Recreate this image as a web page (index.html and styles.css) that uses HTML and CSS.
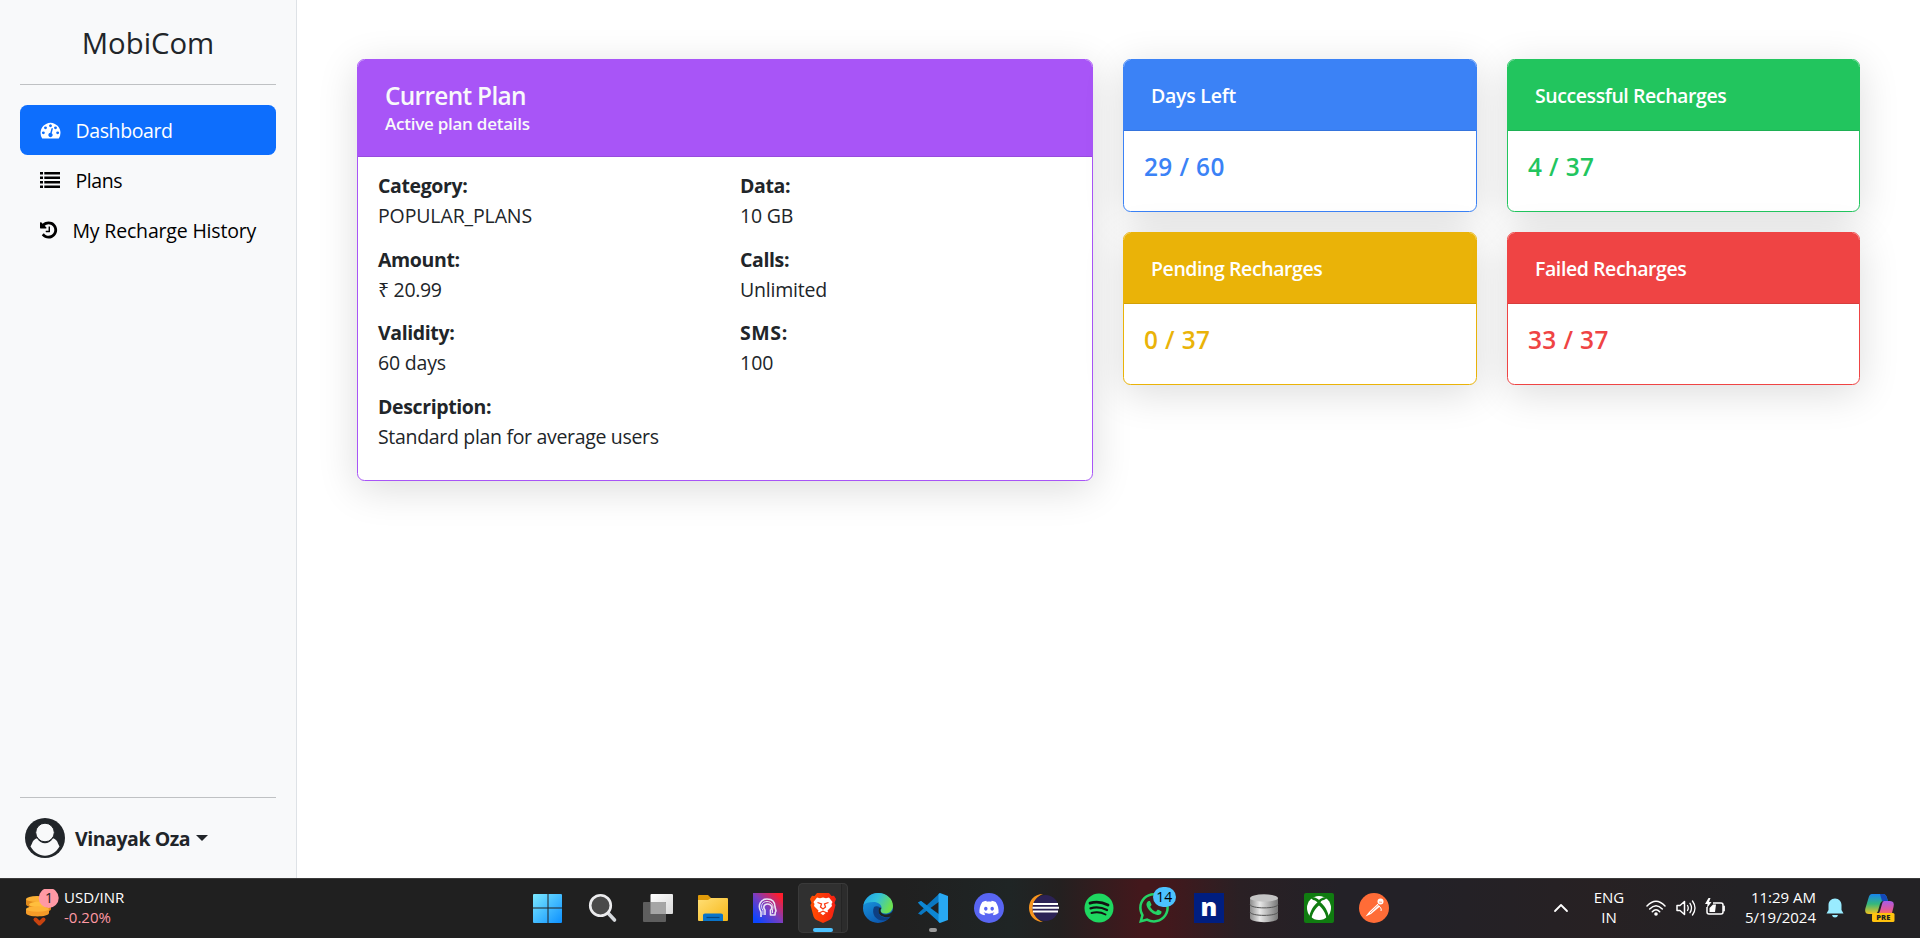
FILE: index.html
```html
<!DOCTYPE html>
<html lang="en">
<head>
<meta charset="utf-8">
<title>MobiCom</title>
<link rel="stylesheet" href="styles.css">
</head>
<body>
<div class="app">
  <aside class="sidebar">
    <div class="brand">MobiCom</div>
    <hr class="rule">
    <nav class="nav">
      <a class="nav-item active"><svg class="ico" width="21" height="20" viewBox="0 0 1792 1792"><path fill="currentColor" d="M384 1152q0-53-37.5-90.5t-90.5-37.5-90.5 37.5-37.5 90.5 37.5 90.5 90.5 37.5 90.5-37.5 37.5-90.5zm192-448q0-53-37.5-90.5t-90.5-37.5-90.5 37.5-37.5 90.5 37.5 90.5 90.5 37.5 90.5-37.5 37.5-90.5zm428 481l101-382q6-26-7.5-48.5t-38.5-29.5-48 6.5-30 39.5l-101 382q-60 5-107 43.5t-63 98.5q-20 77 20 146t117 89 146-20 89-117q16-60-6-117t-72-91zm660-33q0-53-37.5-90.5t-90.5-37.5-90.5 37.5-37.5 90.5 37.5 90.5 90.5 37.5 90.5-37.5 37.5-90.5zm-640-640q0-53-37.5-90.5t-90.5-37.5-90.5 37.5-37.5 90.5 37.5 90.5 90.5 37.5 90.5-37.5 37.5-90.5zm448 192q0-53-37.5-90.5t-90.5-37.5-90.5 37.5-37.5 90.5 37.5 90.5 90.5 37.5 90.5-37.5 37.5-90.5zm320 448q0 261-141 483-19 29-54 29h-1402q-35 0-54-29-141-221-141-483 0-182 71-348t191-286 286-191 348-71 348 71 286 191 191 286 71 348z"/></svg><span class="t-dash">Dashboard</span></a>
      <a class="nav-item"><svg class="ico" width="21" height="20" viewBox="0 0 21 20" fill="currentColor"><path d="M0 2h3v2.600H0zM4.300 2H20v2.600H4.300zM0 6.500h3v2.600H0zM4.300 6.500H20v2.600H4.300zM0 11h3v2.600H0zM4.300 11H20v2.600H4.300zM0 15.400h3V18H0zM4.300 15.400H20V18H4.300z"/></svg><span class="t-plans">Plans</span></a>
      <a class="nav-item"><svg class="ico" width="18" height="20" viewBox="128 0 1536 1792" preserveAspectRatio="xMinYMid"><path fill="currentColor" d="M1664 896q0 156-61 298t-164 245-245 164-298 61q-172 0-327-72.5t-264-204.5q-7-10-6.5-22.5t8.5-20.5l137-138q10-9 25-9 16 2 23 12 73 95 179 147t225 52q104 0 198.5-40.5t163.5-109.5 109.5-163.5 40.5-198.5-40.5-198.5-109.5-163.5-163.5-109.5-198.5-40.5q-98 0-188 35.5t-160 101.5l137 138q31 30 14 69-17 40-59 40h-448q-26 0-45-19t-19-45v-448q0-42 40-59 39-17 69 14l130 129q107-101 244.5-156.5t284.5-55.5q156 0 298 61t245 164 164 245 61 298zm-640-288v448q0 14-9 23t-23 9h-320q-14 0-23-9t-9-23v-64q0-14 9-23t23-9h224v-352q0-14 9-23t23-9h64q14 0 23 9t9 23z"/></svg><span class="t-hist">My Recharge History</span></a>
    </nav>
    <hr class="rule rule-bottom">
    <div class="user">
      <svg class="avatar" width="40" height="40" viewBox="0 0 40 40"><circle cx="20" cy="20" r="20" fill="#212529"/><path fill="#f8f9fa" d="M7 25.500C7.500 23 9.500 21 12 20.200C14 23.500 17 25.300 20 25.300S26 23.500 28 20.200C30.500 21 32.500 23 33 25.500L34.500 28.500C31 34.500 26 37.700 20 37.700S9 34.500 5.500 28.500Z"/><circle cx="20" cy="14.500" r="9.300" fill="#f8f9fa" stroke="#212529" stroke-width="1"/></svg>
      <strong class="user-name">Vinayak Oza</strong><span class="caret"></span>
    </div>
  </aside>
  <main class="main">
    <section class="card plan">
      <header class="card-head plan-head"><h5 class="plan-title">Current Plan</h5><h6 class="plan-sub">Active plan details</h6></header>
      <div class="plan-body">
        <div class="field"><strong>Category:</strong><span class="t-pop">POPULAR_PLANS</span></div>
        <div class="field"><strong>Data:</strong><span>10 GB</span></div>
        <div class="field"><strong>Amount:</strong><span class="t-std">₹ 20.99</span></div>
        <div class="field"><strong>Calls:</strong><span>Unlimited</span></div>
        <div class="field"><strong>Validity:</strong><span>60 days</span></div>
        <div class="field"><strong class="t-sms">SMS:</strong><span class="t-num">100</span></div>
        <div class="field wide"><strong>Description:</strong><span class="t-std">Standard plan for average users</span></div>
      </div>
    </section>
    <div class="stats">
      <section class="card blue"><header class="card-head t-days">Days Left</header><div class="value">29 / 60</div></section>
      <section class="card green"><header class="card-head">Successful Recharges</header><div class="value">4 / 37</div></section>
      <section class="card yellow"><header class="card-head">Pending Recharges</header><div class="value">0 / 37</div></section>
      <section class="card red"><header class="card-head">Failed Recharges</header><div class="value">33 / 37</div></section>
    </div>
  </main>
</div>
<footer class="taskbar">
  <div class="widget">
    <svg width="34" height="38" viewBox="0 0 34 38"><path d="M1 10v5c0 5 22 5 22 0v-5z" fill="#e08a1c"/><ellipse cx="12" cy="10" rx="11" ry="3" fill="#fbb034"/><path d="M4 15v5c0 4.500 22 4.500 22 0v-5z" fill="#e5871c"/><ellipse cx="15" cy="15.500" rx="11" ry="3" fill="#ffbe3d"/><path d="M1 20v4c0 4.500 23 4.500 23 0v-4z" fill="#f49b28"/><ellipse cx="12.500" cy="20" rx="11.500" ry="2.800" fill="#fdb338"/><path d="M10.500 30.500l4 4 4-4" fill="none" stroke="#c8430f" stroke-width="4" stroke-linecap="round" stroke-linejoin="round"/><circle cx="23.700" cy="9" r="10" fill="#ff99a4"/><text x="24" y="14" text-anchor="middle" class="badge-text">1</text></svg>
    <div class="quote"><span>USD/INR</span><span class="down">-0.20%</span></div>
  </div>
  <div class="apps">
    <svg width="30" height="30" viewBox="0 0 30 30"><defs><linearGradient id="win" gradientUnits="userSpaceOnUse" x1="0" y1="0" x2="30" y2="30"><stop stop-color="#7deaff"/><stop offset="1" stop-color="#0b8fff"/></linearGradient></defs><path fill="url(#win)" d="M1 1h13.500v13.500H0V2q0-1 1-1zM15.500 1H28q1 0 1 1v12.500H15.500zM0 15.500h14.500V30H1q-1 0-1-1zM15.500 15.500H29V29q0 1-1 1H15.500z"/></svg>
    <svg width="30" height="30" viewBox="0 0 30 30"><path d="M20 20l6.500 7" stroke="#d5d8dc" stroke-width="3.600" stroke-linecap="round"/><circle cx="12.500" cy="12.500" r="10.300" fill="#4a4a4a" stroke="#ececee" stroke-width="2.600"/></svg>
    <svg width="30" height="30" viewBox="0 0 30 30"><defs><linearGradient id="tv" x2="1" y2="1"><stop stop-color="#fff"/><stop offset="1" stop-color="#d8d8d8"/></linearGradient></defs><rect x="7.500" y="1" width="22.500" height="20" rx="1" fill="url(#tv)"/><rect y="9" width="23" height="20" rx="1" fill="#5e5e5e"/><path d="M7.500 9H22q1 0 1 1v11H7.500z" fill="#a6a6a6"/></svg>
    <svg width="30" height="30" viewBox="0 0 30 30"><defs><linearGradient id="fo" x2="1" y2="1"><stop stop-color="#ffdf76"/><stop offset="1" stop-color="#f7b717"/></linearGradient></defs><path d="M0 3q0-1 1-1h9l3 3v5H0z" fill="#e19b09"/><path d="M0 7h10l3-2h16q1 0 1 1v21q0 1-1 1H1q-1 0-1-1z" fill="url(#fo)"/><path d="M5 28v-6q0-1.500 2-1.500h16q2 0 2 1.500v6z" fill="#0a74c9"/><path d="M8.500 24.500h13" stroke="#07457f" stroke-width="1.200"/></svg>
    <svg width="30" height="30" viewBox="0 0 30 30"><defs><linearGradient id="ia" x1="0" y1="1" x2="1" y2="0"><stop offset=".1" stop-color="#0b45ff"/><stop offset=".5" stop-color="#7b3dc0"/><stop offset=".9" stop-color="#ff1d2d"/></linearGradient></defs><path d="M0 0h30v30H0z" fill="url(#ia)"/><path d="M8 24v-5C4 12 8 6 14 6c6 0 8 4 8 8l1 4q-1 1-1 4h-4.500v-5c2.500-2 1-6-3-6s-4.500 4-2.500 6v5" fill="none" stroke="#e9e4f5" stroke-width="1.600" stroke-linejoin="round"/><path d="M10 22v-4.500C7 13 9 8.500 14 8.500s7 4.500 5.500 8.500v3" fill="none" stroke="#e9e4f5" stroke-width="1"/></svg>
    <div class="running"><svg width="30" height="30" viewBox="0 0 30 30"><defs><linearGradient id="br" x2="1"><stop stop-color="#ff5000"/><stop offset="1" stop-color="#f51f13"/></linearGradient></defs><path fill="url(#br)" d="M9 0h12l2.500 3 2.500-.3 2 3.300-1.500 4 1 2-3 11.500q-1 2.500-3 3.500L15 30l-6.500-3q-2-1-3-3.500L2.500 12l1-2L2 6l2-3.300L6.500 3z"/><path fill="#fff" d="M9 4.500l3 .8 3-.8 3 .8 3-.8 3.500 4.500-1 2 .5 2-4.500 4.500.5 1.500-2 .8-3 2.500-3-2.500-2-.8.500-1.500L6 13l.5-2-1-2z"/><path d="M9.500 9.500l4 1.500-1 3 2.500 2 2.500-2-1-3 4-1.500M11 20l4-1.800 4 1.800" fill="none" stroke="#fb3a12" stroke-width="1.300"/></svg></div>
    <svg width="30" height="30" viewBox="0 0 30 30"><defs><linearGradient id="e1" x2="1" y2=".4"><stop stop-color="#1d9fe8"/><stop offset=".5" stop-color="#32c0da"/><stop offset="1" stop-color="#6ce052"/></linearGradient><linearGradient id="e2" x2=".6" y2="1"><stop stop-color="#1ba3e8"/><stop offset="1" stop-color="#0b56ae"/></linearGradient></defs><circle cx="15" cy="15" r="15" fill="url(#e2)"/><path d="M.5 12C2 5 8 0 15 0c9 0 15 6 15 13 0 5-4 7.500-7.500 7.500-3 0-5-1-5-2.500 0-1 1-1.500 1-3.500 0-3-3.500-5.500-8-5.500C6 9 2 10 .5 12z" fill="url(#e1)"/><path d="M11 14c-3 7 2 13.500 9 13.500 3 0 5.500-1 7.500-3.500-5 2-12 0-12-6 0-1.500.5-3 1.500-3.500-2-1.500-4.500-1.500-6-.5z" fill="#0e3f82"/><path d="M17.500 17c0 2.500 2 4.500 5.500 4.500 3.500 0 6-1.500 7.500-5v6l-2.500 1c-5 2-12.500 0-12.500-5.500 0-1.500.5-3 1.500-3.500l1.500.500q-1 1-1 2z" fill="#202222"/></svg>
    <div class="open"><svg width="30" height="30" viewBox="0 0 30 30"><path d="M22 0L8.500 12.500 3 8 0 9.500 6 15l-6 5.500L3 22l19-14z" fill="#0a78c2"/><path d="M0 9.500L3 8l19 14v8L2 12z" fill="#0d87d4"/><path d="M22 0l8 3v24l-8 3-1.500-1V1z" fill="#28a8f2"/></svg></div>
    <svg width="30" height="30" viewBox="0 0 30 30"><circle cx="15" cy="15" r="15" fill="#5865f2"/><g transform="translate(5.400 5.400) scale(.8)"><path fill="#fff" d="M20.317 4.370a19.791 19.791 0 00-4.885-1.515.074.074 0 00-.079.037c-.211.375-.445.865-.608 1.250-1.845-.276-3.680-.276-5.487 0-.164-.393-.406-.874-.618-1.250a.077.077 0 00-.079-.037 19.736 19.736 0 00-4.885 1.515.070.070 0 00-.032.028C.533 9.046-.319 13.580.099 18.058a.082.082 0 00.031.056c2.053 1.508 4.041 2.423 5.993 3.029a.078.078 0 00.084-.028c.462-.630.873-1.295 1.226-1.994a.076.076 0 00-.042-.106c-.653-.248-1.274-.550-1.872-.892a.077.077 0 01-.008-.128c.126-.094.252-.192.372-.291a.074.074 0 01.078-.011c3.928 1.793 8.180 1.793 12.061 0a.074.074 0 01.079.010c.120.099.246.198.373.292a.077.077 0 01-.007.128 12.299 12.299 0 01-1.873.891.077.077 0 00-.041.107c.360.698.772 1.363 1.225 1.993a.076.076 0 00.084.029c1.961-.607 3.950-1.522 6.002-3.029a.077.077 0 00.031-.055c.500-5.177-.838-9.674-3.549-13.660a.061.061 0 00-.031-.029zM8.020 15.331c-1.183 0-2.157-1.086-2.157-2.419 0-1.333.956-2.419 2.157-2.419 1.211 0 2.176 1.095 2.157 2.419 0 1.333-.956 2.419-2.157 2.419zm7.975 0c-1.183 0-2.157-1.086-2.157-2.419 0-1.333.955-2.419 2.157-2.419 1.211 0 2.176 1.095 2.157 2.419 0 1.333-.946 2.419-2.157 2.419z"/></g></svg>
    <svg width="30" height="30" viewBox="0 0 30 30"><path d="M14 1C5 1 0 7.500 0 15s5.500 14 14 14C8 27 4 21 4 15S8 3 14 1z" fill="#f7941e"/><circle cx="16.500" cy="15" r="13" fill="#2c2255"/><path d="M4 11h25M3.500 14.800H30M4 18.600h25" stroke="#fff" stroke-width="2"/></svg>
    <svg width="30" height="30" viewBox="0 0 30 30"><circle cx="15" cy="15" r="14.500" fill="#1ed760"/><path d="M6 10.200Q15 7.500 24 12" fill="none" stroke="#121212" stroke-width="2.800" stroke-linecap="round"/><path d="M6.500 15.300Q15 13 23 17" fill="none" stroke="#121212" stroke-width="2.300" stroke-linecap="round"/><path d="M7.500 20Q15 18 21.500 21.500" fill="none" stroke="#121212" stroke-width="1.900" stroke-linecap="round"/></svg>
    <div class="badged"><svg width="30" height="30" viewBox="0 0 16 16"><path fill="#25d366" d="M13.601 2.326A7.850 7.850 0 0 0 7.994 0C3.627 0 .068 3.558.064 7.926c0 1.399.366 2.760 1.057 3.965L0 16l4.204-1.102a7.900 7.900 0 0 0 3.790.965h.004c4.368 0 7.926-3.558 7.930-7.930A7.900 7.900 0 0 0 13.600 2.326zM7.994 14.521a6.600 6.600 0 0 1-3.356-.920l-.240-.144-2.494.654.666-2.433-.156-.251a6.560 6.560 0 0 1-1.007-3.505c0-3.626 2.957-6.584 6.591-6.584a6.560 6.560 0 0 1 4.660 1.931 6.560 6.560 0 0 1 1.928 4.660c-.004 3.639-2.961 6.592-6.592 6.592m3.615-4.934c-.197-.099-1.170-.578-1.353-.646-.182-.065-.315-.099-.445.099-.133.197-.513.646-.627.775-.114.133-.232.148-.430.050-.197-.100-.836-.308-1.592-.985-.590-.525-.985-1.175-1.103-1.372-.114-.198-.011-.304.088-.403.087-.088.197-.232.296-.346.100-.114.133-.198.198-.330.065-.134.034-.248-.015-.347-.050-.099-.445-1.076-.612-1.470-.160-.389-.323-.335-.445-.340-.114-.007-.247-.007-.380-.007a.730.730 0 0 0-.529.247c-.182.198-.691.677-.691 1.654s.710 1.916.810 2.049c.098.133 1.394 2.132 3.383 2.992.470.205.840.326 1.129.418.475.152.904.129 1.246.080.380-.058 1.171-.480 1.338-.943.164-.464.164-.860.114-.943-.049-.084-.182-.133-.380-.232"/></svg><span class="count">14</span></div>
    <div class="n-tile">n</div>
    <svg width="30" height="30" viewBox="0 0 30 30"><defs><linearGradient id="db" x2="1"><stop stop-color="#8c8c8c"/><stop offset=".35" stop-color="#e8e8e8"/><stop offset="1" stop-color="#777"/></linearGradient></defs><path d="M1 5v20c0 5.500 28 5.500 28 0V5z" fill="url(#db)"/><path d="M1 11.500c1 4.500 27 4.500 28 0M1 19c1 4.500 27 4.500 28 0" fill="none" stroke="#555" stroke-width="1"/><ellipse cx="15" cy="5" rx="14" ry="3.700" fill="#c4c4c4"/></svg>
    <svg width="30" height="30" viewBox="0 0 30 30"><rect width="30" height="30" rx="2" fill="#107c10"/><circle cx="15" cy="15" r="12" fill="#fff"/><path d="M7 5C10 3 13 5.500 15 7c2-1.500 5-4 8-2l-3 2c-2 0-3 1-3.500 2.500C20 12 24 18 24.500 23l-2 3C22 20 18 15 15 12.500 12 15 8 20 7.500 26l-2-3C6 18 10 12 13.500 9.500 12 8 11 7 9 7z" fill="#107c10"/></svg>
    <svg width="30" height="30" viewBox="0 0 30 30"><circle cx="15" cy="15" r="15" fill="#ff6c37"/><path d="M6.500 23.500l3.500-4.500 8.500-8 2.500 2.500-9 7.500z" fill="#fff"/><circle cx="21.500" cy="8.500" r="3" fill="#fff"/><path d="M10 19l2 2M18 11l3 3q2 2 1 4" stroke="#fff" fill="none" stroke-width="1"/><path d="M11 20l9-8.500M20 9l3 .3" stroke="#ff6c37" stroke-width=".7"/></svg>
  </div>
  <div class="tray">
    <svg class="chev" width="16" height="16" viewBox="0 0 16 16"><path d="M2 11l6-6 6 6" fill="none" stroke="#fff" stroke-width="1.800" stroke-linecap="round" stroke-linejoin="round"/></svg>
    <div class="lang"><span>ENG</span><span>IN</span></div>
    <svg class="wifi" width="20" height="20" viewBox="0 0 20 20"><path d="M1 8Q10-1.500 19 8M3.700 11Q10 4.300 16.300 11M6.300 13.700Q10 9.800 13.700 13.700" fill="none" stroke="#fff" stroke-width="1.500" stroke-linecap="round"/><circle cx="10" cy="16" r="1.800" fill="#fff"/></svg>
    <svg class="vol" width="20" height="20" viewBox="0 0 20 20" fill="none" stroke="#fff" stroke-width="1.500" stroke-linecap="round" stroke-linejoin="round"><path d="M1 7.500h3L8.500 3.500v13L4 12.500H1z"/><path d="M11.500 7.500Q13 10 11.500 12.500M14 5.300Q17 10 14 14.700M16.500 3Q21.500 10 16.500 17" stroke-width="1.300"/></svg>
    <svg class="bat" width="20" height="20" viewBox="0 0 20 20"><path d="M8 5h8q2 0 2 2v7q0 2-2 2H4q-2 0-2-2V9" fill="none" stroke="#fff" stroke-width="1.500"/><path d="M19 8.500v4" stroke="#fff" stroke-width="1.800" stroke-linecap="round"/><path d="M4.500 14V10L8 6.500h3L10 14zM3.500 0L0 6h2.500L2 10l4.500-6H4L5.500 0z" fill="#fff"/></svg>
    <div class="clock"><span>11:29 AM</span><span>5/19/2024</span></div>
    <svg class="bell" width="18" height="20" viewBox="0 0 18 20"><path d="M9 .500c-4 0-6.500 3-6.500 6.500v5L.5 15.500h17l-2-3.500V7C15.500 3.500 13 .500 9 .500zM6 17h6q-.5 2.500-3 2.500T6 17z" fill="#99ebff"/></svg>
    <svg class="copilot" width="30" height="30" viewBox="0 0 30 30"><defs><linearGradient id="c1" x2="0" y2="1"><stop stop-color="#1685ee"/><stop offset=".5" stop-color="#35b87b"/><stop offset="1" stop-color="#f5c31c"/></linearGradient><linearGradient id="c2" x2="0" y2="1"><stop stop-color="#a85be8"/><stop offset=".6" stop-color="#e0599c"/><stop offset="1" stop-color="#ff7a45"/></linearGradient></defs><path d="M7 1h11q3 0 4 4l1 3h-5q-2 0-3 3l-2 7q-1 3-4 3H4q-5 0-3.500-6l3-10Q4.500 1 7 1z" fill="url(#c1)"/><path d="M15 1h3q3 0 4 4l1 3h-6z" fill="#1449b8"/><path d="M19 8h6q5 0 3.500 6l-2 8H12q2-1 3-4l2-7q.5-3 2-3z" fill="url(#c2)"/><rect x="7" y="20" width="22.500" height="9" rx="1.500" fill="#ffc20e"/><text x="18.300" y="27.400" text-anchor="middle" class="pre-text">PRE</text></svg>
  </div>
</footer>
</body>
</html>
```
FILE: styles.css
```css
* { box-sizing: border-box; }
body { margin: 0; width: 1920px; height: 938px; overflow: hidden; background: #fff; color: #212529; font: 19.5px/30px "Segoe UI", "Open Sans", "Noto Sans", sans-serif; font-weight: 370; }
h5, h6 { margin: 0; }
.app { display: flex; height: 878px; }
.sidebar { display: flex; flex-direction: column; width: 297px; padding: 19px 20px 20px; background: #f8f9fa; border-right: 1px solid #dee2e6; }
.brand { padding-top: 2px; height: 45px; font-size: 29.3px; line-height: 45px; text-align: center; letter-spacing: 0; }
.rule { width: 256px; height: 1px; margin: 20px 0; border: 0; background: #bfc1c3; flex: none; }
.rule-bottom { margin-top: auto; }
.nav { display: flex; flex-direction: column; }
.nav-item { display: flex; align-items: center; height: 50px; padding: 0 20px; border-radius: 7.5px; color: #000; }
.nav-item.active { background: #0d6efd; color: #fff; }
.ico { margin-right: 14.500px; flex: none; }
.nav-item span { padding-top: 2px; white-space: nowrap; }
.t-dash { letter-spacing: -.4px; }
.t-plans { letter-spacing: -.4px; }
.t-hist { letter-spacing: -.18px; }
.user { display: flex; align-items: center; height: 40px; padding-left: 5px; }
.user-name { margin-left: 10px; padding-top: 2px; white-space: nowrap; letter-spacing: -.45px; }
.caret { margin-left: 6px; border-top: 6px solid #212529; border-left: 6px solid transparent; border-right: 6px solid transparent; }
.main { display: flex; align-items: flex-start; gap: 30px; padding: 59px 60px 0; }
.card { border: 1px solid var(--c); border-radius: 7.5px; background: #fff; box-shadow: 0 8px 40px rgba(0, 0, 0, .14); color: var(--c); }
.card-head { padding: 24px 28px 0 27px; height: 71px; line-height: 24px; font-weight: 600; letter-spacing: -.42px; color: #fff; background: var(--c); border-bottom: 1px solid rgba(0, 0, 0, .1); border-radius: 6.5px 6.5px 0 0; white-space: nowrap; }
.t-days { letter-spacing: -.25px; }
.plan { --c: #a855f7; width: 736px; height: 422px; color: #212529; }
.plan-head { height: 97px; padding: 21px 27px 0; color: #f8f9fa; }
.plan-title { font-size: 24.4px; line-height: 30px; font-weight: 600; letter-spacing: -.68px; }
.plan-sub { margin-top: 2px; font-size: 17px; line-height: 21px; font-weight: 600; letter-spacing: -.25px; }
.plan-body { display: grid; grid-template-columns: 362px 1fr; row-gap: 13.500px; padding: 14px 20px 0; }
.field { display: flex; flex-direction: column; align-items: flex-start; letter-spacing: -.2px; }
.field strong { letter-spacing: -.38px; }
.field .t-sms { letter-spacing: .6px; }
.field .t-num { letter-spacing: 0; }
.field .t-pop { letter-spacing: -.12px; }
.field .t-std { letter-spacing: -.32px; }
.wide { grid-column: 1 / -1; }
.stats { display: grid; grid-template-columns: 354px 353px; gap: 20px 30px; }
.stats .card { height: 153px; }
.blue { --c: #3b82f6; }
.green { --c: #22c55e; }
.yellow { --c: #eab308; }
.red { --c: #ef4444; }
.value { padding: 21px 20px 0; font-size: 24.4px; line-height: 30px; font-weight: 560; letter-spacing: .4px; }
.taskbar { display: grid; grid-template-columns: 533px 856px 1fr; align-items: center; height: 60px; padding-bottom: 1px; color: #fff; font-size: 15px; line-height: 20px; font-weight: 400; border-top: 1px solid #3b3b3b; background: linear-gradient(90deg, #202020 0, #202020 900px, #1f2525 1010px, #242020 1060px, #43181c 1140px, #43181c 1165px, #2a2024 1240px, #232127 1340px, #232127 1420px, #272123 1600px, #232225 1740px, #232225 100%); }
.widget { display: flex; padding-left: 25px; gap: 5px; align-items: center; }
.quote, .lang, .clock { display: flex; flex-direction: column; align-items: flex-start; white-space: nowrap; }
.quote, .lang, .clock { padding-bottom: 2px; }
.down { color: #ff99a4; }
.badge-text { font: 14px "Open Sans", sans-serif; fill: #222; }
.apps { display: flex; justify-content: space-between; align-items: center; }
.apps > svg { flex: none; }
.running, .open, .badged { position: relative; width: 30px; height: 30px; }
.running svg, .open svg, .badged svg { display: block; position: relative; }
.running::before { content: ""; position: absolute; left: -10px; top: -10px; width: 50px; height: 50px; border-radius: 5px; background: linear-gradient(90deg, #303030 43px, #242424 43px, #242424 44px, #2c2c2c 44px); box-shadow: inset 0 0 0 1px #3a3a3a; }
.running::after { content: ""; position: absolute; left: 5px; top: 35px; width: 20px; height: 4px; border-radius: 2px; background: #4cc2ff; }
.open::after { content: ""; position: absolute; left: 11px; top: 35px; width: 8px; height: 4px; border-radius: 2px; background: #9a9a9a; }
.count { position: absolute; left: 14px; top: -6px; width: 23px; height: 20px; border-radius: 10px; background: #4cc2ff; color: #000; font-size: 14px; line-height: 20px; text-align: center; }
.n-tile { width: 30px; height: 30px; background: #001e80; color: #fff; font-size: 25px; font-weight: 800; line-height: 27px; text-align: center; }
.pre-text { font: 800 7.5px "Open Sans", sans-serif; fill: #222; }
.tray { display: flex; align-items: center; padding-left: 164px; }
.lang { margin-left: 25px; width: 30px; align-items: center; }
.wifi { margin-left: 22px; }
.vol { margin-left: 10px; }
.bat { margin-left: 9px; }
.clock { align-items: flex-end; width: 70px; margin-left: 21px; }
.bell { margin-left: 10px; }
.copilot { margin-left: 21px; }
```
